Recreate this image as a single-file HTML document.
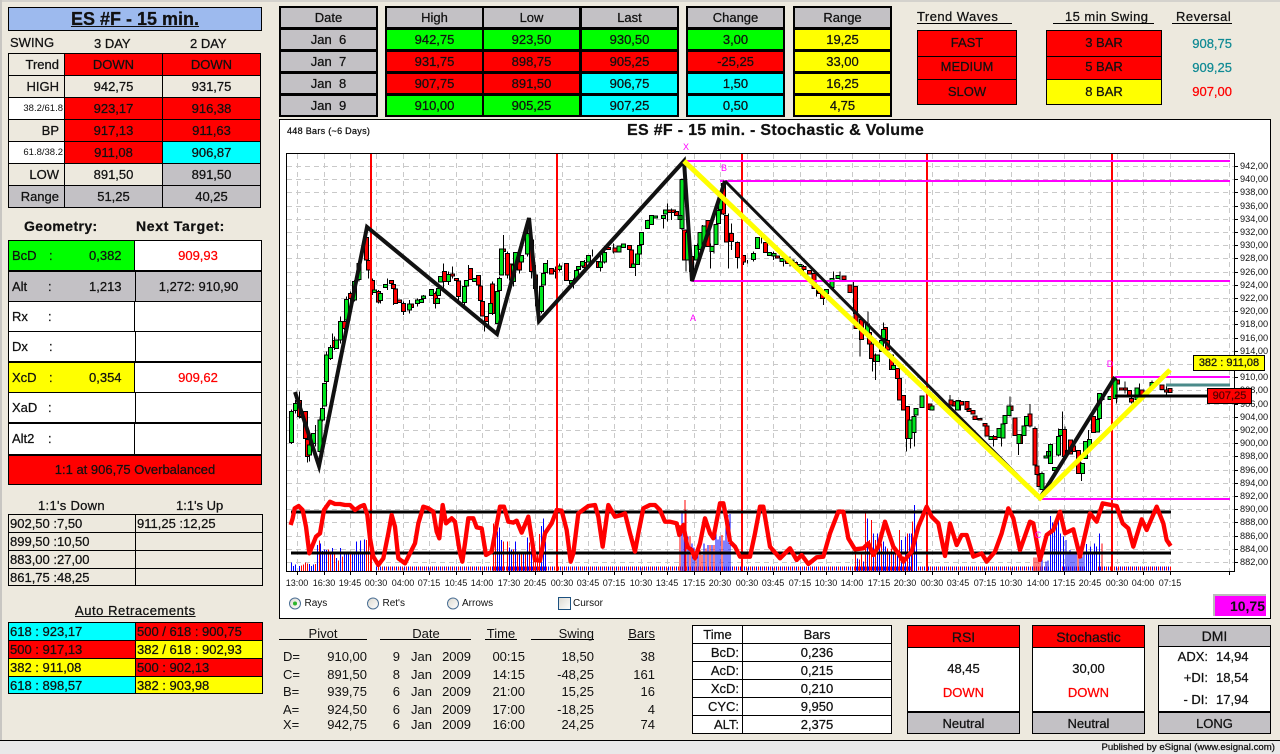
<!DOCTYPE html>
<html><head><meta charset="utf-8"><title>ES #F - 15 min.</title>
<style>
html,body{margin:0;padding:0;width:1280px;height:754px;overflow:hidden;background:#ede9de;font-family:"Liberation Sans",sans-serif;font-size:13px;color:#111;-webkit-text-stroke:.25px}
.b{position:absolute;box-sizing:border-box;white-space:pre;display:flex;align-items:center;justify-content:center}
.k{border:1px solid #000}
.n{position:absolute;white-space:pre}
.g{background:#00ff00}.r{background:#ff0000}.c{background:#00ffff}.y{background:#ffff00}.e{background:#c3c1c5}.w{background:#fff}.p{background:#ede9de}
.ra{justify-content:flex-end;padding-right:5px}
.la{justify-content:flex-start;padding-left:1px}
.h0,.h1,.h2,.h3,.h4{height:19px}
.h0{top:8px}.h1{top:30px}.h2{top:52px}.h3{top:74px}.h4{top:96px}
.u{text-decoration:underline}
svg{position:absolute;left:0;top:0}
svg text{font-family:"Liberation Sans",sans-serif;stroke:none;-webkit-text-stroke:.2px}
</style></head><body>
<div class="b" style="left:0;top:0;width:1280px;height:2px;background:#d4d2cd"></div>
<div class="b" style="left:0;top:0;width:2px;height:740px;background:#c8c6c2"></div>
<div class="b" style="left:0;top:740px;width:1280px;height:14px;background:#e9e9e9;border-top:1px solid #000"></div>
<div class="n" style="right:5px;top:741px;font-size:9.6px;line-height:13px;letter-spacing:.02px">Published by eSignal (www.esignal.com)</div>

<div class="b k u" style="left:8px;top:7px;width:254px;height:24px;background:#9dbaee;font-size:18px;font-weight:bold">ES #F - 15 min.</div>
<div class="n" style="left:10px;top:35px;font-size:13px">SWING</div>
<div class="n" style="left:94px;top:36px;font-size:13px">3 DAY</div>
<div class="n" style="left:190px;top:36px;font-size:13px">2 DAY</div>

<div class="b k p ra" style="left:8px;top:53px;width:57px;height:23px">Trend</div><div class="b k r" style="left:64px;top:53px;width:99px;height:23px">DOWN</div><div class="b k r" style="left:162px;top:53px;width:99px;height:23px">DOWN</div>
<div class="b k p ra" style="left:8px;top:75px;width:57px;height:23px">HIGH</div><div class="b k p" style="left:64px;top:75px;width:99px;height:23px">942,75</div><div class="b k p" style="left:162px;top:75px;width:99px;height:23px">931,75</div>
<div class="b k w" style="left:8px;top:97px;width:57px;height:23px;font-size:9.5px;justify-content:flex-end;padding-right:1px;-webkit-text-stroke:0">38.2/61.8</div><div class="b k r" style="left:64px;top:97px;width:99px;height:23px">923,17</div><div class="b k r" style="left:162px;top:97px;width:99px;height:23px">916,38</div>
<div class="b k p ra" style="left:8px;top:119px;width:57px;height:23px">BP</div><div class="b k r" style="left:64px;top:119px;width:99px;height:23px">917,13</div><div class="b k r" style="left:162px;top:119px;width:99px;height:23px">911,63</div>
<div class="b k w" style="left:8px;top:141px;width:57px;height:23px;font-size:9.5px;justify-content:flex-end;padding-right:1px;-webkit-text-stroke:0">61.8/38.2</div><div class="b k r" style="left:64px;top:141px;width:99px;height:23px">911,08</div><div class="b k c" style="left:162px;top:141px;width:99px;height:23px">906,87</div>
<div class="b k p ra" style="left:8px;top:163px;width:57px;height:23px">LOW</div><div class="b k p" style="left:64px;top:163px;width:99px;height:23px">891,50</div><div class="b k e" style="left:162px;top:163px;width:99px;height:23px">891,50</div>
<div class="b k e ra" style="left:8px;top:185px;width:57px;height:23px">Range</div><div class="b k e" style="left:64px;top:185px;width:99px;height:23px">51,25</div><div class="b k e" style="left:162px;top:185px;width:99px;height:23px">40,25</div>

<div class="n" style="left:24px;top:218px;font-size:14px;font-weight:bold;letter-spacing:.4px">Geometry:</div>
<div class="n" style="left:136px;top:218px;font-size:14px;font-weight:bold;letter-spacing:.7px">Next Target:</div>

<div class="b k g" style="left:8px;top:240px;width:127px;height:31px"></div><div class="b k w" style="left:134px;top:240px;width:128px;height:31px;color:#ff0000">909,93</div>
<div class="b k e" style="left:8px;top:270px;width:128px;height:32px;border-top-width:2px"></div><div class="b k e" style="left:135px;top:270px;width:127px;height:32px;border-top-width:2px">1,272: 910,90</div>
<div class="b k w" style="left:8px;top:301px;width:127px;height:31px"></div><div class="b k w" style="left:134px;top:301px;width:128px;height:31px"></div>
<div class="b k w" style="left:8px;top:331px;width:128px;height:31px"></div><div class="b k w" style="left:135px;top:331px;width:127px;height:31px"></div>
<div class="b k y" style="left:8px;top:361px;width:127px;height:32px;border-top-width:2px"></div><div class="b k w" style="left:134px;top:361px;width:128px;height:32px;border-top-width:2px;color:#ff0000">909,62</div>
<div class="b k w" style="left:8px;top:392px;width:128px;height:31px"></div><div class="b k w" style="left:135px;top:392px;width:127px;height:31px"></div>
<div class="b k w" style="left:8px;top:422px;width:127px;height:33px;border-top-width:2px"></div><div class="b k w" style="left:134px;top:422px;width:128px;height:33px;border-top-width:2px"></div>
<div class="b k r" style="left:8px;top:454px;width:254px;height:31px;border-top-width:2px;padding-bottom:2px">1:1 at 906,75 Overbalanced</div>

<div class="n" style="left:12px;top:248px">BcD</div><div class="n" style="left:49px;top:248px">:</div><div class="n" style="left:89px;top:248px">0,382</div>
<div class="n" style="left:12px;top:279px">Alt</div><div class="n" style="left:48px;top:279px">:</div><div class="n" style="left:89px;top:279px">1,213</div>
<div class="n" style="left:12px;top:309px">Rx</div><div class="n" style="left:48px;top:309px">:</div>
<div class="n" style="left:12px;top:339px">Dx</div><div class="n" style="left:49px;top:339px">:</div>
<div class="n" style="left:12px;top:370px">XcD</div><div class="n" style="left:49px;top:370px">:</div><div class="n" style="left:89px;top:370px">0,354</div>
<div class="n" style="left:12px;top:400px">XaD</div><div class="n" style="left:48px;top:400px">:</div>
<div class="n" style="left:12px;top:431px">Alt2</div><div class="n" style="left:48px;top:431px">:</div>

<div class="n" style="left:38px;top:498px;font-size:13px;letter-spacing:.3px">1:1's Down</div>
<div class="n" style="left:176px;top:498px;font-size:13px">1:1's Up</div>
<div class="b k la" style="left:8px;top:514px;width:128px;height:19px">902,50 :7,50</div><div class="b k la" style="left:135px;top:514px;width:128px;height:19px">911,25 :12,25</div>
<div class="b k la" style="left:8px;top:532px;width:128px;height:19px">899,50 :10,50</div><div class="b k" style="left:135px;top:532px;width:128px;height:19px"></div>
<div class="b k la" style="left:8px;top:550px;width:128px;height:19px">883,00 :27,00</div><div class="b k" style="left:135px;top:550px;width:128px;height:19px"></div>
<div class="b k la" style="left:8px;top:568px;width:128px;height:18px">861,75 :48,25</div><div class="b k" style="left:135px;top:568px;width:128px;height:18px"></div>

<div class="n u" style="left:75px;top:603px;font-size:13px;letter-spacing:.55px">Auto Retracements</div>
<div class="b k c la" style="left:8px;top:622px;width:128px;height:19px">618 : 923,17</div><div class="b k r la" style="left:135px;top:622px;width:128px;height:19px">500 / 618 : 900,75</div>
<div class="b k r la" style="left:8px;top:640px;width:128px;height:19px">500 : 917,13</div><div class="b k y la" style="left:135px;top:640px;width:128px;height:19px">382 / 618 : 902,93</div>
<div class="b k y la" style="left:8px;top:658px;width:128px;height:19px">382 : 911,08</div><div class="b k r la" style="left:135px;top:658px;width:128px;height:19px">500 : 902,13</div>
<div class="b k c la" style="left:8px;top:676px;width:128px;height:18px">618 : 898,57</div><div class="b k y la" style="left:135px;top:676px;width:128px;height:18px">382 : 903,98</div>

<!-- top black frames -->
<div class="b" style="left:279px;top:6px;width:99px;height:111px;background:#000"></div>
<div class="b" style="left:385px;top:6px;width:294px;height:111px;background:#000"></div>
<div class="b" style="left:686px;top:6px;width:99px;height:111px;background:#000"></div>
<div class="b" style="left:793px;top:6px;width:99px;height:111px;background:#000"></div>

<div class="b e h0" style="left:281px;width:95px">Date</div><div class="b e h1" style="left:281px;width:95px">Jan  6</div><div class="b e h2" style="left:281px;width:95px">Jan  7</div><div class="b e h3" style="left:281px;width:95px">Jan  8</div><div class="b e h4" style="left:281px;width:95px">Jan  9</div>
<div class="b e h0" style="left:387px;width:95px">High</div><div class="b g h1" style="left:387px;width:95px">942,75</div><div class="b r h2" style="left:387px;width:95px">931,75</div><div class="b r h3" style="left:387px;width:95px">907,75</div><div class="b g h4" style="left:387px;width:95px">910,00</div>
<div class="b e h0" style="left:484px;width:95px">Low</div><div class="b g h1" style="left:484px;width:95px">923,50</div><div class="b r h2" style="left:484px;width:95px">898,75</div><div class="b r h3" style="left:484px;width:95px">891,50</div><div class="b g h4" style="left:484px;width:95px">905,25</div>
<div class="b e h0" style="left:582px;width:95px">Last</div><div class="b g h1" style="left:582px;width:95px">930,50</div><div class="b r h2" style="left:582px;width:95px">905,25</div><div class="b c h3" style="left:582px;width:95px">906,75</div><div class="b c h4" style="left:582px;width:95px">907,25</div>
<div class="b e h0" style="left:688px;width:95px">Change</div><div class="b g h1" style="left:688px;width:95px">3,00</div><div class="b r h2" style="left:688px;width:95px">-25,25</div><div class="b c h3" style="left:688px;width:95px">1,50</div><div class="b c h4" style="left:688px;width:95px">0,50</div>
<div class="b e h0" style="left:795px;width:95px">Range</div><div class="b y h1" style="left:795px;width:95px">19,25</div><div class="b y h2" style="left:795px;width:95px">33,00</div><div class="b y h3" style="left:795px;width:95px">16,25</div><div class="b y h4" style="left:795px;width:95px">4,75</div>

<div class="n" style="left:917px;top:9px;letter-spacing:.45px">Trend Waves</div><div class="b" style="left:917px;top:23px;width:95px;height:1px;background:#000"></div>
<div class="n" style="left:1065px;top:9px;letter-spacing:.45px">15 min Swing</div><div class="b" style="left:1053px;top:23px;width:101px;height:1px;background:#000"></div>
<div class="n" style="left:1176px;top:9px;letter-spacing:.5px">Reversal</div><div class="b" style="left:1172px;top:23px;width:60px;height:1px;background:#000"></div>
<div class="b k r" style="left:917px;top:30px;width:100px;height:27px;padding-bottom:2px">FAST</div><div class="b k r" style="left:917px;top:56px;width:100px;height:24px;padding-bottom:3px">MEDIUM</div><div class="b k r" style="left:917px;top:79px;width:100px;height:26px;padding-bottom:2px">SLOW</div>
<div class="b k r" style="left:1046px;top:30px;width:116px;height:27px;padding-bottom:2px">3 BAR</div><div class="b k r" style="left:1046px;top:56px;width:116px;height:24px;padding-bottom:3px">5 BAR</div><div class="b k y" style="left:1046px;top:79px;width:116px;height:26px;padding-bottom:2px">8 BAR</div>
<div class="n" style="right:48px;top:36px;color:#0f8a94">908,75</div>
<div class="n" style="right:48px;top:60px;color:#0f8a94">909,25</div>
<div class="n" style="right:48px;top:84px;color:#ff0000">907,00</div>

<!-- chart panel -->
<div class="b k w" style="left:279px;top:119px;width:992px;height:500px"></div>
<div class="n" style="left:287px;top:126px;font-size:9px;letter-spacing:.3px">448 Bars (~6 Days)</div>
<div class="n" style="left:627px;top:122px;font-size:16px;font-weight:bold;letter-spacing:.3px">ES #F - 15 min. - Stochastic &amp; Volume</div>
<div class="b k" style="left:286px;top:153px;width:949px;height:419px"></div>

<svg width="1280" height="754" viewBox="0 0 1280 754">
<g fill="none" stroke="#c9c9c9" stroke-dasharray="5 4" shape-rendering="crispEdges">
<path d="M287 166.5H1234M287 179.5H1234M287 192.5H1234M287 206.5H1234M287 219.5H1234M287 232.5H1234M287 245.5H1234M287 258.5H1234M287 272.5H1234M287 285.5H1234M287 298.5H1234M287 311.5H1234M287 324.5H1234M287 338.5H1234M287 351.5H1234M287 364.5H1234M287 377.5H1234M287 390.5H1234M287 404.5H1234M287 417.5H1234M287 430.5H1234M287 443.5H1234M287 456.5H1234M287 470.5H1234M287 483.5H1234M287 496.5H1234M287 509.5H1234M287 522.5H1234M287 536.5H1234M287 549.5H1234M287 562.5H1234"/>
<path d="M297.5 154V571M324.5 154V571M350.5 154V571M376.5 154V571M403.5 154V571M429.5 154V571M456.5 154V571M482.5 154V571M509.5 154V571M535.5 154V571M562.5 154V571M588.5 154V571M614.5 154V571M641.5 154V571M667.5 154V571M694.5 154V571M720.5 154V571M747.5 154V571M773.5 154V571M800.5 154V571M826.5 154V571M852.5 154V571M879.5 154V571M905.5 154V571M932.5 154V571M958.5 154V571M985.5 154V571M1011.5 154V571M1038.5 154V571M1064.5 154V571M1090.5 154V571M1117.5 154V571M1143.5 154V571M1170.5 154V571M1229.5 154V571"/>
</g>
<g stroke="#000" fill="none" shape-rendering="crispEdges">
<path d="M297.5 571v4M324.5 571v4M350.5 571v4M376.5 571v4M403.5 571v4M429.5 571v4M456.5 571v4M482.5 571v4M509.5 571v4M535.5 571v4M562.5 571v4M588.5 571v4M614.5 571v4M641.5 571v4M667.5 571v4M694.5 571v4M720.5 571v4M747.5 571v4M773.5 571v4M800.5 571v4M826.5 571v4M852.5 571v4M879.5 571v4M905.5 571v4M932.5 571v4M958.5 571v4M985.5 571v4M1011.5 571v4M1038.5 571v4M1064.5 571v4M1090.5 571v4M1117.5 571v4M1143.5 571v4M1170.5 571v4M1229.5 571v4"/>
<path d="M1234 166.5h4M1234 179.5h4M1234 192.5h4M1234 206.5h4M1234 219.5h4M1234 232.5h4M1234 245.5h4M1234 258.5h4M1234 272.5h4M1234 285.5h4M1234 298.5h4M1234 311.5h4M1234 324.5h4M1234 338.5h4M1234 351.5h4M1234 364.5h4M1234 377.5h4M1234 390.5h4M1234 404.5h4M1234 417.5h4M1234 430.5h4M1234 443.5h4M1234 456.5h4M1234 470.5h4M1234 483.5h4M1234 496.5h4M1234 509.5h4M1234 522.5h4M1234 536.5h4M1234 549.5h4M1234 562.5h4"/>
</g>

<!-- candles zone 1 -->
<g transform="translate(280 150) scale(.33333)" stroke="#000" stroke-width="3" shape-rendering="crispEdges">
<path fill="none" d="M34 778V882M46 750V790M58 725V805M82 865V938M88 880V935M106 825V890M120 800V930M127 765V815M139 605V700M151 585V630M157 550V600M163 560V600M181 500V580M193 480V540M199 440V515M211 425V470M223 390V455M237 325V395M260 235V335M266 325V385M278 385V435M296 420V460M302 425V460M322 385V420M340 400V465M370 455V495M388 450V490M412 445V470M430 435V450M466 425V475M490 340V425M505 365V405M517 350V385M535 385V460M553 405V465M565 345V400M601 405V460M613 495V545M625 490V530M637 395V495M658 380V430M670 255V310M682 305V385M700 340V410M718 310V370M742 205V320M754 265V385M766 345V470M784 405V490M802 330V370M826 350V385M838 340V365M880 385V415M913 330V365M937 298V320M961 310V365M973 288V340M1000 280V310"/>
<path fill="#ff0000" d="M52 752h12V800h-12zM58 785h12V803h-12zM70 785h12V865h-12zM76 868h12V920h-12zM157 572h12V592h-12zM187 515h12V535h-12zM205 430h12V445h-12zM254 262h12V330h-12zM260 332h12V360h-12zM272 392h12V420h-12zM290 425h12V456h-12zM328 392h12V400h-12zM334 403h12V415h-12zM340 417h12V460h-12zM352 450h12V458h-12zM364 460h12V484h-12zM388 462h12V472h-12zM460 430h12V460h-12zM487 365h12V395h-12zM511 372h12V378h-12zM523 385h12V392h-12zM529 393h12V440h-12zM565 355h12V388h-12zM589 377h12V405h-12zM595 408h12V452h-12zM601 455h12V498h-12zM613 500h12V515h-12zM631 402h12V490h-12zM664 297h12V305h-12zM676 310h12V375h-12zM688 342h12V390h-12zM712 316h12V360h-12zM748 270h12V365h-12zM760 375h12V415h-12zM808 355h12V372h-12zM820 360h12V365h-12zM854 340h12V392h-12zM907 338h12V352h-12zM949 335h12V352h-12zM979 292h12V298h-12zM999 294h12V306h-12z"/>
<path fill="#00e61e" d="M28 785h12V878h-12zM40 760h12V782h-12zM82 885h12V915h-12zM94 850h12V880h-12zM114 810h12V905h-12zM121 775h12V810h-12zM127 700h12V768h-12zM133 615h12V695h-12zM145 592h12V625h-12zM164 570h12V595h-12zM175 515h12V570h-12zM193 448h12V510h-12zM217 395h12V450h-12zM231 340h12V388h-12zM278 420h12V428h-12zM296 430h12V452h-12zM310 403h12V413h-12zM382 462h12V480h-12zM406 450h12V460h-12zM418 448h12V458h-12zM424 438h12V445h-12zM448 418h12V436h-12zM466 445h12V460h-12zM470 415h12V436h-12zM475 380h12V396h-12zM499 374h12V395h-12zM547 410h12V458h-12zM553 392h12V408h-12zM577 385h12V395h-12zM625 460h12V490h-12zM646 425h12V520h-12zM652 385h12V422h-12zM658 297h12V375h-12zM694 345h12V395h-12zM700 308h12V358h-12zM718 316h12V336h-12zM736 250h12V312h-12zM778 410h12V484h-12zM784 370h12V405h-12zM790 340h12V368h-12zM832 348h12V358h-12zM869 392h12V400h-12zM883 362h12V388h-12zM889 350h12V358h-12zM901 335h12V348h-12zM919 316h12V336h-12zM955 336h12V352h-12zM967 308h12V336h-12zM1011 288h12V306h-12z"/>
</g>
<!-- candles zone 2 -->
<g transform="translate(620 150) scale(.33333)" stroke="#000" stroke-width="3" shape-rendering="crispEdges">
<path fill="none" d="M46 340V378M130 195V235M142 160V215M154 175V210M186 85V240M198 240V365M214 300V395M232 280V335M248 225V300M272 280V355M282 240V310M310 95V195M326 190V355M334 220V300M352 275V355M370 315V345M382 330V340M400 305V335M424 255V280M460 305V330M490 325V350M510 320V350M530 335V355M550 345V365M590 410V440M610 425V465M640 365V415M660 365V390M700 395V440M720 505V620M744 485V570M758 580V665M766 610V690M790 518V600M802 565V610M860 770V905M872 810V895M884 790V890M990 735V775"/>
<path fill="#ff0000" d="M22 287h12V298h-12zM28 300h12V352h-12zM142 180h12V188h-12zM154 180h12V188h-12zM164 184h12V196h-12zM188 240h12V330h-12zM208 320h12V365h-12zM258 212h12V290h-12zM304 100h12V192h-12zM314 196h12V276h-12zM328 250h12V274h-12zM346 278h12V322h-12zM364 316h12V336h-12zM430 278h12V308h-12zM466 318h12V324h-12zM496 332h12V340h-12zM520 338h12V346h-12zM546 350h12V358h-12zM562 362h12V372h-12zM576 370h12V415h-12zM592 415h12V430h-12zM602 430h12V445h-12zM666 378h12V388h-12zM684 405h12V428h-12zM700 410h12V490h-12zM702 490h12V535h-12zM718 508h12V568h-12zM742 548h12V582h-12zM748 582h12V625h-12zM760 615h12V635h-12zM790 532h12V568h-12zM796 572h12V600h-12zM808 615h12V658h-12zM826 655h12V685h-12zM832 686h12V750h-12zM844 736h12V780h-12zM856 770h12V865h-12zM924 762h12V778h-12zM996 755h12V768h-12z"/>
<path fill="#00e61e" d="M4 282h12V292h-12zM34 342h12V352h-12zM46 312h12V344h-12zM52 287h12V312h-12zM58 248h12V284h-12zM76 212h12V236h-12zM88 196h12V224h-12zM100 198h12V204h-12zM124 196h12V206h-12zM130 180h12V192h-12zM174 196h12V208h-12zM180 88h12V235h-12zM196 248h12V330h-12zM224 286h12V330h-12zM234 248h12V298h-12zM246 228h12V286h-12zM270 290h12V304h-12zM282 224h12V284h-12zM290 182h12V220h-12zM296 142h12V178h-12zM394 310h12V328h-12zM406 262h12V296h-12zM442 308h12V316h-12zM456 310h12V318h-12zM480 326h12V334h-12zM510 330h12V338h-12zM534 344h12V350h-12zM614 418h12V430h-12zM630 386h12V412h-12zM648 376h12V386h-12zM736 522h12V552h-12zM766 615h12V635h-12zM778 572h12V605h-12zM784 538h12V565h-12zM814 646h12V658h-12zM864 810h12V865h-12zM876 800h12V848h-12zM882 775h12V795h-12zM900 738h12V772h-12zM930 768h12V780h-12zM1010 752h12V780h-12z"/>
</g>
<!-- candles zone 3 -->
<g transform="translate(950 340) scale(.33333)" stroke="#000" stroke-width="3" shape-rendering="crispEdges">
<path fill="none" d="M130 285V320M155 250V320M180 170V230M205 282V345M240 192V262M255 260V380M276 395V450M301 310V370M325 265V350M337 215V350M345 260V340M395 368V423M415 270V320M500 115V190M525 125V160M545 155V190M568 130V180M606 122V150M650 140V165"/>
<path fill="#ff0000" d="M-3 180h12V195h-12zM29 184h12V195h-12zM45 185h12V208h-12zM51 206h12V215h-12zM63 212h12V222h-12zM69 228h12V238h-12zM84 235h12V240h-12zM99 250h12V258h-12zM105 258h12V288h-12zM129 290h12V298h-12zM177 198h12V212h-12zM189 234h12V286h-12zM205 284h12V310h-12zM234 222h12V258h-12zM249 265h12V375h-12zM255 378h12V403h-12zM261 405h12V440h-12zM337 268h12V350h-12zM346 332h12V340h-12zM355 300h12V342h-12zM364 318h12V335h-12zM379 332h12V400h-12zM424 230h12V278h-12zM450 165h12V178h-12zM497 120h12V132h-12zM509 144h12V150h-12zM521 144h12V150h-12zM533 152h12V165h-12zM539 175h12V186h-12zM570 150h12V165h-12zM630 135h12V148h-12zM644 150h12V156h-12zM654 146h12V158h-12z"/>
<path fill="#00e61e" d="M17 183h12V210h-12zM117 290h12V298h-12zM141 266h12V292h-12zM153 252h12V294h-12zM159 226h12V250h-12zM171 198h12V226h-12zM201 284h12V310h-12zM216 258h12V286h-12zM224 230h12V256h-12zM270 400h12V448h-12zM282 348h12V354h-12zM289 335h12V348h-12zM295 314h12V370h-12zM307 382h12V392h-12zM319 290h12V345h-12zM325 268h12V286h-12zM391 370h12V400h-12zM400 305h12V355h-12zM412 298h12V325h-12zM436 238h12V276h-12zM442 160h12V235h-12zM474 170h12V178h-12zM489 120h12V175h-12zM555 144h12V178h-12zM600 128h12V142h-12z"/>
</g>

<!-- volume low bars -->
<g fill="none" shape-rendering="crispEdges">
<path stroke="#0000ff" stroke-width="4" stroke-dasharray="1 3" d="M376 568.5H1171"/>
<path stroke="#ff0000" stroke-width="4" stroke-dasharray="1 3" stroke-dashoffset="2" d="M376 568.5H1171"/>
</g>
<!-- volume spikes zone left -->
<g transform="translate(280 490) scale(.33333)" fill="none" stroke-width="3" shape-rendering="crispEdges">
<path stroke="#0000ff" d="M34 243V218M40 243V228M46 243V224M58 243V228M88 243V222M94 243V228M100 243V224M112 243V165M121 243V160M127 243V183M133 243V178M139 243V180M157 243V174M169 243V204M181 243V174M187 243V208M193 243V194M199 243V194M205 243V190M217 243V190M223 243V190M229 243V154M235 243V186M241 243V152M247 243V185M253 243V148M652 243V125M658 243V112M664 243V150M688 243V172M694 243V178M706 243V154M718 243V184M730 243V186M742 243V142M754 243V160M784 243V108M790 243V85M796 243V155M1206 243V65M1212 243V105M1224 243V140M1236 243V160M1242 243V172M1254 243V175M1272 243V160M1284 243V165M1296 243V165M1308 243V120M1314 243V148M1320 243V140M1332 243V152M1338 243V110M1344 243V75"/>
<path stroke="#ff0000" d="M64 243V226M70 243V224M76 243V218M82 243V220M106 243V222M118 243V152M145 243V178M151 243V190M163 243V188M175 243V212M187 243V200M211 243V192M259 243V150M265 243V120M640 243V100M646 243V130M670 243V155M682 243V155M700 243V178M712 243V185M724 243V188M736 243V185M748 243V158M760 243V145M766 243V190M772 243V190M778 243V132M1200 243V105M1215 243V30M1218 243V60M1230 243V138M1248 243V180M1260 243V180M1266 243V195M1278 243V175M1290 243V165M1302 243V165M1326 243V135"/>
</g>
<g transform="translate(730 490) scale(.33333)" fill="none" stroke-width="3" shape-rendering="crispEdges">
<path stroke="#0000ff" d="M0 243V72M382 243V205M400 243V215M412 243V85M430 243V130M442 243V130M448 243V170M460 243V155M466 243V170M478 243V190M490 243V185M502 243V180M514 243V150M526 243V140M538 243V130M544 243V130M553 243V45M560 243V115M936 243V195M948 243V215M954 243V212M962 243V78M968 243V98M974 243V105M980 243V102M986 243V92M992 243V130M1000 243V140M1008 243V150M1014 243V185M1020 243V180M1026 243V190M1032 243V190M1038 243V188M1050 243V170M1056 243V200M1062 243V190M1070 243V162M1076 243V185M1082 243V170M1088 243V185M1094 243V160M1100 243V170M1108 243V130"/>
<path stroke="#ff0000" d="M376 243V182M388 243V208M394 243V188M406 243V65M418 243V150M424 243V90M436 243V150M454 243V160M472 243V175M484 243V175M496 243V175M508 243V120M520 243V200M532 243V130M548 243V95M912 243V202M918 243V202M924 243V190M930 243V200M1044 243V190M1116 243V160"/>
</g>

<!-- red verticals -->
<path stroke="#ff0000" stroke-width="2" fill="none" shape-rendering="crispEdges" d="M371 154V571M557 154V571M742 154V571M927 154V571M1112 154V571"/>

<!-- magenta levels -->
<path stroke="#ff00ff" stroke-width="2" fill="none" shape-rendering="crispEdges" d="M686 161H1230M720 181H1230M692 281H1230M1115 377H1230M1042 499H1230"/>

<!-- black swing -->
<path fill="none" stroke="#111" stroke-width="4" d="M295 392L319 466L367 227L497 334L529 218L539 321L684 161L692 281L725 181"/>
<path fill="none" stroke="#111" stroke-width="3" d="M725 181L1040 498"/>
<path fill="none" stroke="#111" stroke-width="4" d="M1040 498L1115 377"/>
<!-- yellow -->
<path fill="none" stroke="#ffff00" stroke-width="5" d="M684 161L1040 498L1170 370"/>

<!-- price line teal / black -->
<path fill="none" shape-rendering="crispEdges" stroke="#4a8a8a" stroke-width="3" d="M1166 385H1230"/>
<path fill="none" shape-rendering="crispEdges" stroke="#000" stroke-width="3" d="M1115 396H1207"/>

<!-- stochastic -->
<path fill="none" shape-rendering="crispEdges" stroke="#000" stroke-width="3" d="M291 512H1171M291 553H1171"/>
<g fill="none" stroke="#ff0000" stroke-width="13" stroke-linejoin="round">
<path transform="translate(280 490) scale(.33333)" d="M32 105L38 85L44 55L56 48L68 60L78 110L88 190L98 165L108 140L120 130L132 60L150 35L165 42L180 42L195 45L210 45L225 60L240 50L252 45L262 75L270 145L280 200L295 225L310 205L325 130L335 75L345 110L355 205L375 220L390 190L405 160L415 100L430 50L445 55L460 65L470 125L478 145L488 45L498 100L515 85L525 95L540 190L547 215L555 160L565 85L580 85L590 112L605 115L618 195L635 185L645 130L660 50L672 50L685 95L700 98L710 92L725 128L745 80L765 210L780 212L795 130L815 100L830 60L845 62L860 120L872 215L880 190L895 70L925 48L945 45L955 80L968 170L985 45L1005 80L1025 75L1035 70L1050 130L1065 185L1075 130L1090 55L1110 45L1125 45L1140 60L1155 95L1170 95L1190 100L1198 135L1210 105L1222 170L1235 180L1245 205L1260 160L1275 85L1290 130L1300 145L1320 40L1330 40L1340 90L1350 155"/>
<path transform="translate(730 490) scale(.33333)" d="M0 155L15 170L30 200L60 200L75 130L90 50L100 50L120 170L150 205L180 175L200 210L215 195L235 222L260 202L280 200L300 130L325 65L340 65L355 145L375 178L400 175L415 160L430 195L445 170L465 95L490 170L505 190L520 215L545 185L565 110L590 50L605 80L625 100L645 198L660 100L680 165L695 135L710 135L730 200L755 190L770 215L795 185L815 130L835 55L850 85L870 180L900 95L910 100L930 210L950 135L970 120L990 65L1005 130L1030 118L1050 200L1080 70L1100 95L1118 40L1160 48L1178 100L1195 115L1210 170L1235 88L1250 120L1280 50L1300 100L1310 150L1322 168"/>
</g>

<!-- letter tags -->
<g fill="#ff00ff" font-size="9" text-anchor="middle">
<text x="686" y="150">X</text><text x="724" y="171">B</text><text x="693" y="321">A</text><text x="1110" y="367">D</text><text x="1038" y="538">C</text>
</g>

<!-- price labels -->
<g font-size="9.2" fill="#111">
<text x="1240" y="169">942,00</text><text x="1240" y="182">940,00</text><text x="1240" y="195">938,00</text><text x="1240" y="209">936,00</text><text x="1240" y="222">934,00</text><text x="1240" y="235">932,00</text><text x="1240" y="248">930,00</text><text x="1240" y="261">928,00</text><text x="1240" y="275">926,00</text><text x="1240" y="288">924,00</text><text x="1240" y="301">922,00</text><text x="1240" y="314">920,00</text><text x="1240" y="327">918,00</text><text x="1240" y="341">916,00</text><text x="1240" y="354">914,00</text><text x="1240" y="393">908,00</text><text x="1240" y="407">906,00</text><text x="1240" y="380">910,00</text><text x="1240" y="420">904,00</text><text x="1240" y="433">902,00</text><text x="1240" y="446">900,00</text><text x="1240" y="459">898,00</text><text x="1240" y="473">896,00</text><text x="1240" y="486">894,00</text><text x="1240" y="499">892,00</text><text x="1240" y="512">890,00</text><text x="1240" y="525">888,00</text><text x="1240" y="539">886,00</text><text x="1240" y="552">884,00</text><text x="1240" y="565">882,00</text>
</g>
<g font-size="9" fill="#111" text-anchor="middle">
<text x="297" y="586">13:00</text><text x="324" y="586">16:30</text><text x="350" y="586">19:45</text><text x="376" y="586">00:30</text><text x="403" y="586">04:00</text><text x="429" y="586">07:15</text><text x="456" y="586">10:45</text><text x="482" y="586">14:00</text><text x="509" y="586">17:30</text><text x="535" y="586">20:45</text><text x="562" y="586">00:30</text><text x="588" y="586">03:45</text><text x="614" y="586">07:15</text><text x="641" y="586">10:30</text><text x="667" y="586">13:45</text><text x="694" y="586">17:15</text><text x="720" y="586">20:30</text><text x="747" y="586">00:30</text><text x="773" y="586">03:45</text><text x="800" y="586">07:15</text><text x="826" y="586">10:30</text><text x="852" y="586">14:00</text><text x="879" y="586">17:15</text><text x="905" y="586">20:30</text><text x="932" y="586">00:30</text><text x="958" y="586">03:45</text><text x="985" y="586">07:15</text><text x="1011" y="586">10:30</text><text x="1038" y="586">14:00</text><text x="1064" y="586">17:15</text><text x="1090" y="586">20:45</text><text x="1117" y="586">00:30</text><text x="1143" y="586">04:00</text><text x="1170" y="586">07:15</text>
</g>

<!-- radios -->
<defs><linearGradient id="rg" x1="0" y1="0" x2="1" y2="1"><stop offset="0" stop-color="#dcd9d0"/><stop offset="1" stop-color="#fff"/></linearGradient></defs>
<g stroke="#4b6f94" stroke-width="1" fill="url(#rg)">
<circle cx="295" cy="603.5" r="5.5"/><circle cx="373" cy="603.5" r="5.5"/><circle cx="453" cy="603.5" r="5.5"/>
<rect x="558.5" y="597.5" width="12" height="12" stroke="#1c5180"/>
</g>
<circle cx="295" cy="603.5" r="2" fill="#2bb52b"/>
<g font-size="10" fill="#111"><text x="304.5" y="606">Rays</text><text x="382.5" y="606">Ret's</text><text x="462" y="606">Arrows</text><text x="573" y="606">Cursor</text></g>

<!-- pivots -->
<g font-size="13" fill="#111" text-anchor="end">
<text x="323" y="638" text-anchor="middle">Pivot</text><text x="426" y="638" text-anchor="middle">Date</text><text x="501" y="638" text-anchor="middle">Time</text><text x="594" y="638">Swing</text><text x="655" y="638">Bars</text>
<g text-anchor="start"><text x="283" y="661">D=</text><text x="283" y="679">C=</text><text x="283" y="696">B=</text><text x="283" y="714">A=</text><text x="283" y="729">X=</text></g>
<text x="367" y="661">910,00</text><text x="367" y="679">891,50</text><text x="367" y="696">939,75</text><text x="367" y="714">924,50</text><text x="367" y="729">942,75</text>
<text x="400" y="661">9</text><text x="400" y="679">8</text><text x="400" y="696">6</text><text x="400" y="714">6</text><text x="400" y="729">6</text>
<text x="432" y="661">Jan</text><text x="432" y="679">Jan</text><text x="432" y="696">Jan</text><text x="432" y="714">Jan</text><text x="432" y="729">Jan</text>
<text x="471" y="661">2009</text><text x="471" y="679">2009</text><text x="471" y="696">2009</text><text x="471" y="714">2009</text><text x="471" y="729">2009</text>
<text x="525" y="661">00:15</text><text x="525" y="679">14:15</text><text x="525" y="696">21:00</text><text x="525" y="714">17:00</text><text x="525" y="729">16:00</text>
<text x="594" y="661">18,50</text><text x="594" y="679">-48,25</text><text x="594" y="696">15,25</text><text x="594" y="714">-18,25</text><text x="594" y="729">24,25</text>
<text x="655" y="661">38</text><text x="655" y="679">161</text><text x="655" y="696">16</text><text x="655" y="714">4</text><text x="655" y="729">74</text>
</g>
<path fill="none" stroke="#000" shape-rendering="crispEdges" d="M279 639.5H367M380 639.5H471M485 639.5H517M531 639.5H594M628 639.5H655"/>
</svg>

<!-- time/bars -->
<div class="b k w" style="left:692px;top:625px;width:51px;height:19px">Time</div><div class="b k w" style="left:742px;top:625px;width:150px;height:19px">Bars</div>
<div class="b k w" style="left:692px;top:643px;width:51px;height:19px;justify-content:flex-end;padding-right:3px">BcD:</div><div class="b k w" style="left:742px;top:643px;width:150px;height:19px">0,236</div>
<div class="b k w" style="left:692px;top:661px;width:51px;height:19px;justify-content:flex-end;padding-right:3px">AcD:</div><div class="b k w" style="left:742px;top:661px;width:150px;height:19px">0,215</div>
<div class="b k w" style="left:692px;top:679px;width:51px;height:19px;justify-content:flex-end;padding-right:3px">XcD:</div><div class="b k w" style="left:742px;top:679px;width:150px;height:19px">0,210</div>
<div class="b k w" style="left:692px;top:697px;width:51px;height:19px;justify-content:flex-end;padding-right:3px">CYC:</div><div class="b k w" style="left:742px;top:697px;width:150px;height:19px">9,950</div>
<div class="b k w" style="left:692px;top:715px;width:51px;height:19px;justify-content:flex-end;padding-right:3px">ALT:</div><div class="b k w" style="left:742px;top:715px;width:150px;height:19px">2,375</div>

<!-- RSI -->
<div class="b k w" style="left:907px;top:625px;width:113px;height:109px"></div>
<div class="b k r" style="left:907px;top:625px;width:113px;height:23px;font-size:14px">RSI</div>
<div class="b k e" style="left:907px;top:711px;width:113px;height:23px;border-top-width:2px;font-size:13px">Neutral</div>
<div class="b" style="left:907px;top:660px;width:113px;height:16px">48,45</div>
<div class="b" style="left:907px;top:684px;width:113px;height:16px;color:#ff0000">DOWN</div>

<div class="b k w" style="left:1032px;top:625px;width:113px;height:109px"></div>
<div class="b k r" style="left:1032px;top:625px;width:113px;height:23px;font-size:14px">Stochastic</div>
<div class="b k e" style="left:1032px;top:711px;width:113px;height:23px;border-top-width:2px">Neutral</div>
<div class="b" style="left:1032px;top:660px;width:113px;height:16px">30,00</div>
<div class="b" style="left:1032px;top:684px;width:113px;height:16px;color:#ff0000">DOWN</div>

<div class="b k w" style="left:1158px;top:625px;width:113px;height:109px"></div>
<div class="b k e" style="left:1158px;top:625px;width:113px;height:22px;font-size:14px">DMI</div>
<div class="b k e" style="left:1158px;top:711px;width:113px;height:23px;border-top-width:2px">LONG</div>
<div class="n" style="right:72px;top:649px">ADX:</div><div class="n" style="left:1216px;top:649px">14,94</div>
<div class="n" style="right:72px;top:670px">+DI:</div><div class="n" style="left:1216px;top:670px">18,54</div>
<div class="n" style="right:72px;top:692px">- DI:</div><div class="n" style="left:1216px;top:692px">17,94</div>

<!-- chart labels -->
<div class="b k y" style="left:1193px;top:355px;width:72px;height:16px;font-size:11px">382 : 911,08</div>
<div class="b k r" style="left:1207px;top:388px;width:45px;height:16px;font-size:11px;color:#500">907,25</div>
<div class="b" style="left:1213px;top:594px;width:53px;height:22px;background:#ff00ff;border:1px solid #bbb;border-width:2px 0 0 2px;font-size:14px;font-weight:bold;justify-content:flex-end;padding-right:1px;-webkit-text-stroke:0">10,75</div>
</body></html>
